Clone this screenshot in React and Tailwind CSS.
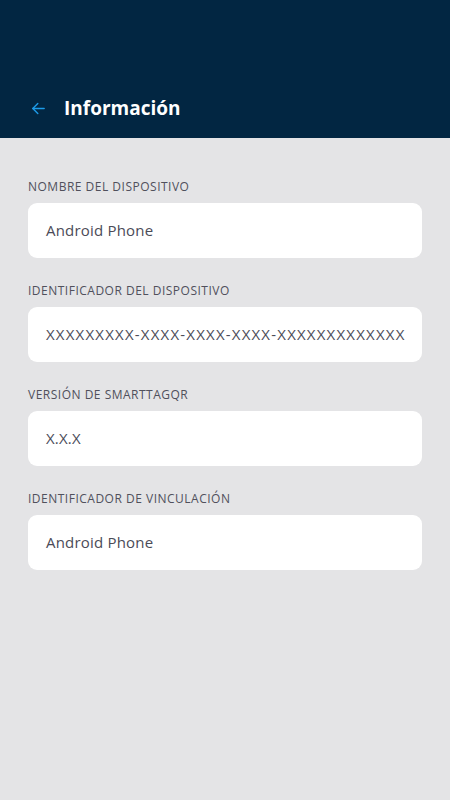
const FIELDS = [
  { label: 'Nombre del dispositivo', value: 'Android Phone' },
  { label: 'Identificador del dispositivo', value: 'XXXXXXXXX-XXXX-XXXX-XXXX-XXXXXXXXXXXXX', wide: true },
  { label: 'Versión de SmartTagQR', value: 'X.X.X' },
  { label: 'Identificador de vinculación', value: 'Android Phone' },
]

export default function App() {
  return (
    <div className="flex min-h-[800px] flex-col bg-[#e4e4e6] font-['Open_Sans',sans-serif]">
      <header className="flex h-[138px] items-end bg-[#022642] px-[30px] pb-[16px]">
        <div className="flex items-center gap-[17px]">
          <svg width="17" height="17" viewBox="0 0 24 24" fill="none" stroke="#1d9be8" strokeWidth="2" strokeLinecap="round" strokeLinejoin="round">
            <path d="M20 12H4" />
            <path d="M11 5l-7 7 7 7" />
          </svg>
          <h1 className="text-[19px] font-bold leading-[28px] text-white">Información</h1>
        </div>
      </header>

      <main className="flex flex-col gap-[25px] px-[28px] pt-[41px]">
        {FIELDS.map((field) => (
          <section key={field.label} className="flex flex-col gap-[8px]">
            <p className="text-[12px] uppercase leading-[16px] tracking-[0.5px] text-[#50505c]">{field.label}</p>
            <div className="flex h-[55px] items-center rounded-[9px] bg-white px-[18px]">
              <span className={field.wide ? 'whitespace-nowrap text-[15px] tracking-[1.2px] text-[#4b4b57]' : 'whitespace-nowrap text-[15px] tracking-[0.2px] text-[#4b4b57]'}>
                {field.value}
              </span>
            </div>
          </section>
        ))}
      </main>
    </div>
  )
}
